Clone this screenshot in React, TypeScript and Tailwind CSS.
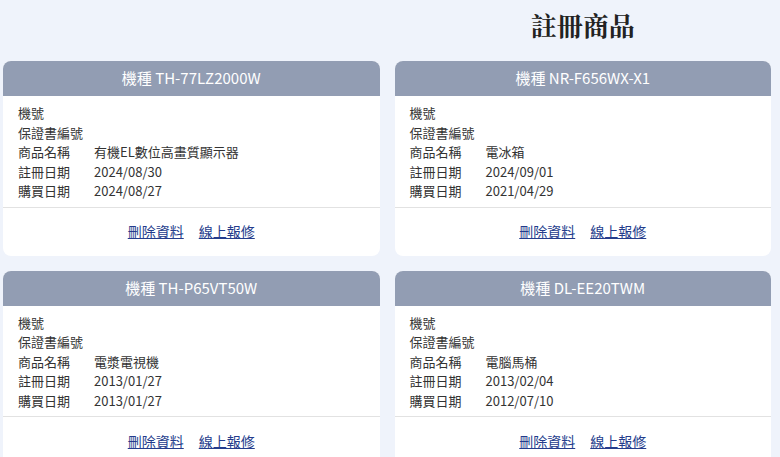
import React from 'react';

interface Product {
  model: string;
  name: string;
  registered: string;
  purchased: string;
}

const products: Product[] = [
  { model: 'TH-77LZ2000W', name: '有機EL數位高畫質顯示器', registered: '2024/08/30', purchased: '2024/08/27' },
  { model: 'NR-F656WX-X1', name: '電冰箱', registered: '2024/09/01', purchased: '2021/04/29' },
  { model: 'TH-P65VT50W', name: '電漿電視機', registered: '2013/01/27', purchased: '2013/01/27' },
  { model: 'DL-EE20TWM', name: '電腦馬桶', registered: '2013/02/04', purchased: '2012/07/10' },
];

const sans = "font-['Noto_Sans_CJK_TC','Noto_Sans',sans-serif]";

const Row = ({ label, value }: { label: string; value?: string }) => (
  <div className="flex h-[19.5px] items-center">
    <span className="w-[76px] shrink-0">{label}</span>
    {value && <span>{value}</span>}
  </div>
);

const ProductCard = ({ product }: { product: Product }) => (
  <div className="bg-white rounded-lg overflow-hidden">
    <div className="h-[35px] bg-[#929db3] flex items-center justify-center text-white text-[15px]">
      機種 {product.model}
    </div>
    <div className="px-[15px] pt-[7px] pb-[6px] text-[13px] text-[#333]">
      <Row label="機號" />
      <Row label="保證書編號" />
      <Row label="商品名稱" value={product.name} />
      <Row label="註冊日期" value={product.registered} />
      <Row label="購買日期" value={product.purchased} />
    </div>
    <div className="border-t border-[#e2e2e2] h-[49px] flex items-center justify-center gap-[15px] text-[14px]">
      <a href="#" className="text-[#243c8c] underline">刪除資料</a>
      <a href="#" className="text-[#243c8c] underline">線上報修</a>
    </div>
  </div>
);

export default function App() {
  return (
    <div className={`min-h-[457px] bg-[#eff3fb] pl-[3px] pr-[9px] ${sans}`}>
      <div className="grid grid-cols-2 gap-x-[15px]">
        <div />
        <h1 className="h-[61px] pt-[5px] text-center text-[26px] font-bold text-[#222] font-['Noto_Serif_CJK_TC','Noto_Sans_CJK_TC',serif]">
          註冊商品
        </h1>
      </div>
      <div className="grid grid-cols-2 gap-[15px]">
        {products.map((p) => (
          <ProductCard key={p.model} product={p} />
        ))}
      </div>
    </div>
  );
}
